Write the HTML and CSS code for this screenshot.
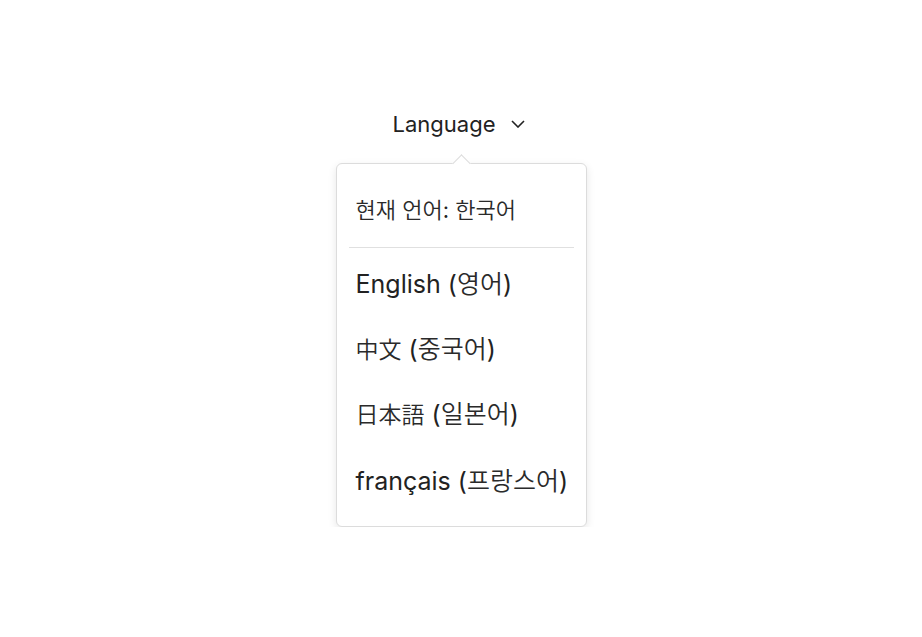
FILE: index.html
```html
<!DOCTYPE html>
<html lang="ko">

<head>
    <meta charset="UTF-8">
    <meta name="viewport" content="width=device-width, initial-scale=1.0">
    <title>Language</title>
    <link rel="stylesheet" href="styles.css">
</head>

<body>
    <div class="lang">
        <div class="trigger">
            <span>Language</span>
            <svg class="chev" width="14" height="8" viewBox="0 0 14 8">
                <path d="M1 1 L7 7 L13 1" fill="none" stroke="#222" stroke-width="1.6" />
            </svg>
        </div>
        <div class="menu">
            <div class="current"><span class="cjk">현재 언어</span>: <span class="cjk">한국어</span></div>
            <div class="line"></div>
            <ul class="items">
                <li>English (<span class="cjk">영어</span>)</li>
                <li><span class="cjk han">中文</span> (<span class="cjk">중국어</span>)</li>
                <li><span class="cjk han">日本語</span> (<span class="cjk">일본어</span>)</li>
                <li class="last">français (<span class="cjk">프랑스어</span>)</li>
            </ul>
        </div>
    </div>
</body>

</html>
```
FILE: styles.css
```css
body {
    margin: 0;
    background: #fff;
    font-family: Inter, "Noto Sans CJK KR", sans-serif;
    color: #222;
}

.lang {
    display: flex;
    flex-direction: column;
    align-items: center;
    padding-top: 109px;
}

.trigger {
    display: flex;
    align-items: center;
    gap: 16px;
    font-size: 22px;
    line-height: 30px;
    margin-left: -4px;
}

.chev {
    display: block;
}

.menu {
    position: relative;
    margin-top: 24px;
    width: 249px;
    border: 1px solid #dcdcdc;
    border-radius: 6px;
    box-shadow: 0 3px 8px rgba(0, 0, 0, 0.1);
    background: #fff;
}

.menu::before {
    content: "";
    position: absolute;
    top: -7px;
    left: 118px;
    width: 12px;
    height: 12px;
    background: #fff;
    border-top: 1px solid #dcdcdc;
    border-left: 1px solid #dcdcdc;
    transform: rotate(45deg);
}

.cjk {
    font-weight: 350;
    color: #2a2a2a;
}

.han {
    font-size: 23px;
}

.current {
    padding: 30px 19px 21px;
    font-size: 22px;
    line-height: 32px;
}

.line {
    height: 1px;
    background: #e0e0e0;
    margin: 0 12px;
}

.items {
    list-style: none;
    margin: 0;
    padding: 4px 0 12px;
}

.items li {
    height: 65px;
    line-height: 65px;
    padding: 0 19px;
    font-size: 25px;
    white-space: nowrap;
}

.items .last {
    height: 67px;
    line-height: 69px;
}
```
